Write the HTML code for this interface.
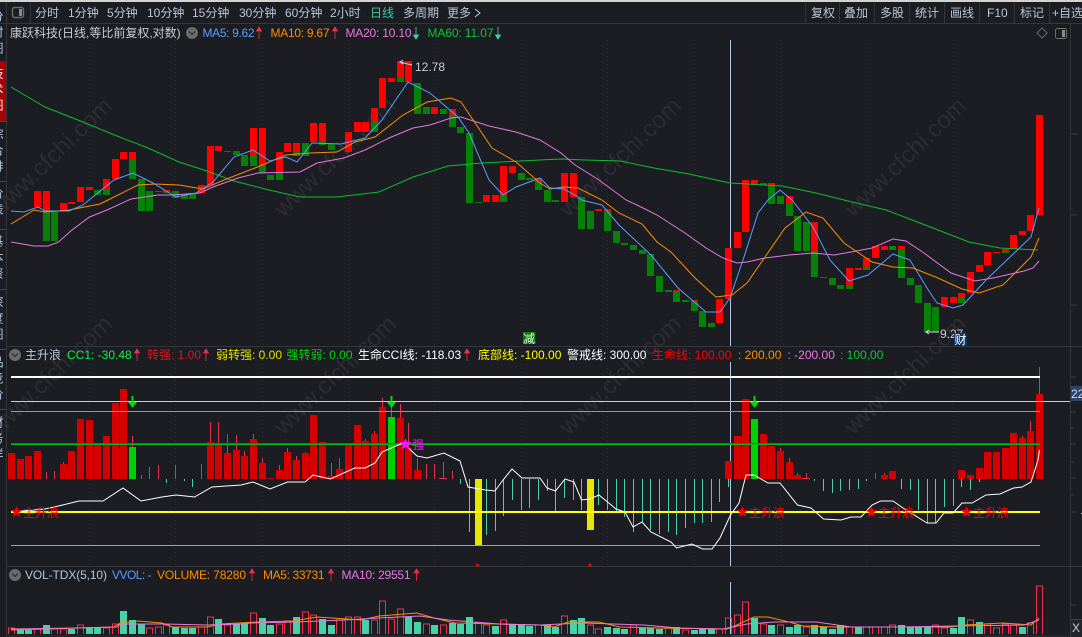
<!DOCTYPE html>
<html><head><meta charset="utf-8"><style>
html,body{margin:0;padding:0;background:#1b1d23;overflow:hidden}
svg{display:block}
text{font-family:"Liberation Sans","WenQuanYi Zen Hei","Noto Sans CJK SC",sans-serif;font-size:12px}
.tb{fill:#bcc5d2}
.v{writing-mode:vertical-rl;letter-spacing:4px;fill:#b8cce4;font-size:12px}
</style></head><body>
<svg width="1082" height="637" viewBox="0 0 1082 637" xmlns="http://www.w3.org/2000/svg">
<rect width="1082" height="637" fill="#1b1d23"/>
<!-- watermark -->
<g fill="#2b2d33" font-size="24" text-anchor="middle" style="font-size:24px">
<text style="font-size:24px" transform="translate(51,157) rotate(-44)" y="8">www.cfchi.com</text>
<text style="font-size:24px" transform="translate(335,157) rotate(-44)" y="8">www.cfchi.com</text>
<text style="font-size:24px" transform="translate(620,157) rotate(-44)" y="8">www.cfchi.com</text>
<text style="font-size:24px" transform="translate(905,157) rotate(-44)" y="8">www.cfchi.com</text>
<text style="font-size:24px" transform="translate(51,375) rotate(-44)" y="8">www.cfchi.com</text>
<text style="font-size:24px" transform="translate(335,375) rotate(-44)" y="8">www.cfchi.com</text>
<text style="font-size:24px" transform="translate(620,375) rotate(-44)" y="8">www.cfchi.com</text>
<text style="font-size:24px" transform="translate(905,375) rotate(-44)" y="8">www.cfchi.com</text>
</g>
<!-- top strip & toolbar -->
<rect width="1082" height="2" fill="#d4d4d4"/>
<path d="M0 23.5H1082M6.500 2V637M30.5 3V23M805.5 3V23M839.5 3V23M874.5 3V23M909.5 3V23M944.5 3V23M979.5 3V23M1014.5 3V23M1049.5 3V23M1070.5 24V637M7 346.5H1082M7 566.5H1082" stroke="#33363d" fill="none" shape-rendering="crispEdges"/>
<rect x="12.5" y="7.5" width="11" height="10" rx="2" fill="none" stroke="#6d6d6d" stroke-width="1.4"/><rect x="19" y="9" width="3" height="7" fill="#8a8a8a"/>
<g class="tb">
<text x="35" y="17">分时</text><text x="68" y="17">1分钟</text><text x="107" y="17">5分钟</text><text x="147" y="17">10分钟</text><text x="192" y="17">15分钟</text><text x="239" y="17">30分钟</text><text x="285" y="17">60分钟</text><text x="330" y="17">2小时</text>
<text x="370" y="17" style="fill:#3fc9a2">日线</text><text x="403" y="17">多周期</text><text x="447" y="17">更多</text>
<path d="M475 9l5 4-5 4" fill="none" stroke="#bcc5d2"/>
<text x="811" y="17">复权</text><text x="844" y="17">叠加</text><text x="880" y="17">多股</text><text x="915" y="17">统计</text><text x="950" y="17">画线</text><text x="987" y="17">F10</text><text x="1020" y="17">标记</text><text x="1052" y="17">+自选</text>
</g>
<!-- sidebar -->
<rect x="0" y="61" width="6" height="60" fill="#a80000"/>
<path d="M0 121.500H6M0 181.500H6M0 229.500H6M0 289.500H6M0 349.500H6M0 409.500H6" stroke="#44474e" shape-rendering="crispEdges"/>
<text class="v" x="-3" y="10">分时图</text>
<text class="v" x="-3" y="67" style="fill:#fff">技术图</text>
<text class="v" x="-3" y="128">综合排</text>
<text class="v" x="-3" y="187">价表</text>
<text class="v" x="-3" y="235">基本资</text>
<text class="v" x="-3" y="296">深度图</text>
<text class="v" x="-3" y="356">品竞价</text>
<text class="v" x="-3" y="416">财务详</text>
<!-- grid -->
<path d="M89.5 40V566M175.5 40V566M262.5 40V566M348.5 40V566M434.5 40V566M521.5 40V566M607.5 40V566M694.5 40V566M780.5 40V566M866.5 40V566M953.5 40V566" stroke="#2c2f36" stroke-dasharray="1 3" shape-rendering="crispEdges"/>
<path d="M1071 134h6M1071 215h6M1071 305h6M1071 377h5M1071 412h5M1071 428h3M1071 444h5M1071 462h3M1071 478h5M1071 495h3M1071 512h5M1071 605h5" stroke="#3a3d44" shape-rendering="crispEdges"/>
<path d="M1081 513.500h1" stroke="#c8ccd4" shape-rendering="crispEdges"/>
<!-- title row -->
<text x="10" y="37" fill="#c8ccd4">康跃科技(日线,等比前复权,对数)</text>
<circle cx="192" cy="33" r="6" fill="#6b6b6b"/><path d="M189 31.5l3 3 3-3" fill="none" stroke="#333" stroke-width="1.300"/>
<text x="202.5" y="37" fill="#5b9cff" textLength="52">MA5: 9.62</text><path d="M259 27l-2.5 4h5zM259 30V39" fill="#f0304a" stroke="#f0304a" stroke-width=".8"/>
<text x="270.5" y="37" fill="#ff8c00" textLength="59">MA10: 9.67</text><path d="M335 27l-2.5 4h5zM335 30V39" fill="#f0304a" stroke="#f0304a" stroke-width=".8"/>
<text x="345.5" y="37" fill="#e878e0" textLength="66">MA20: 10.10</text><path d="M416 39l-2.5-4h5zM416 27V36" fill="#45d2a8" stroke="#45d2a8" stroke-width=".8"/>
<text x="427.5" y="37" fill="#13c13a" textLength="66">MA60: 11.07</text><path d="M498 39l-2.5-4h5zM498 27V36" fill="#45d2a8" stroke="#45d2a8" stroke-width=".8"/>
<path d="M1042 28l5 5-5 5-5-5z" fill="none" stroke="#6a6a6a"/>
<rect x="1055.5" y="28.5" width="11" height="10" rx="2" fill="none" stroke="#6d6d6d"/><rect x="1062" y="30" width="3" height="7" fill="#8a8a8a"/>
<!-- crosshair -->
<path d="M730.5 40V346M730.5 362V566M730.5 582V634" stroke="#b4c4e8" shape-rendering="crispEdges"/>
<!-- candles -->
<g fill="none" stroke-width="7" shape-rendering="crispEdges">
<path stroke="#ff0000" d="M37.5 191V207M46.5 191V211M63.5 203V211M71.5 202V204M80.5 187V202M89.5 187V190M106.5 179V190M115.5 159V179M123.5 152V159M132.5 152V159M158.5 191V192M166.5 190V191M201.5 185V193M210.5 146V185M218.5 146V151M253.5 128V155M262.5 128V166M279.5 152V173M287.5 143V152M296.5 143V152M313.5 123V142M322.5 123V142M348.5 132V152M357.5 122V132M365.5 122V132M374.5 108V122M382.5 78V108M391.5 78V82M400.5 61V78M408.5 61V82M434.5 107V114M452.5 109V115M486.5 195V202M495.5 195V202M503.5 166V195M512.5 166V173M538.5 178V181M564.5 173V202M573.5 173V197M598.5 209V211M607.5 209V211M676.5 290V292M694.5 300V302M719.5 299V323M728.5 248V299M737.5 232V248M745.5 180V232M754.5 180V185M771.5 183V185M789.5 196V204M814.5 222V251M849.5 268V285M858.5 268V270M866.5 258V268M875.5 246V258M884.5 246V250M901.5 246V250M944.5 297V307M953.5 297V303M961.5 293V297M970.5 272V293M979.5 265V272M987.5 252V265M996.5 252V253M1005.5 249V252M1013.5 235V249M1022.5 231V235M1030.5 215V231M1039.5 115V215"/>
<path stroke="#068006" d="M46.5 211V241M54.5 211V241M97.5 190V195M106.5 190V195M132.5 159V179M141.5 179V211M149.5 191V211M166.5 191V193M175.5 191V198M184.5 195V199M192.5 193V199M227.5 151V152M236.5 151V155M244.5 155V166M253.5 155V166M262.5 166V173M270.5 175V180M279.5 173V180M296.5 152V156M305.5 143V156M322.5 142V145M331.5 144V150M374.5 122V132M400.5 78V82M417.5 83V114M426.5 107V114M443.5 109V114M452.5 115V127M460.5 127V133M469.5 133V203M478.5 202V203M503.5 195V202M521.5 173V180M529.5 178V180M538.5 181V190M547.5 190V202M555.5 200V202M581.5 197V229M590.5 211V229M607.5 211V231M616.5 231V243M624.5 243V245M633.5 245V250M642.5 250V254M650.5 254V276M659.5 276V292M668.5 290V292M676.5 292V302M685.5 300V302M694.5 302V311M702.5 311V327M711.5 323V327M763.5 183V185M771.5 185V204M780.5 196V204M789.5 204V216M797.5 216V251M806.5 222V251M814.5 251V277M823.5 277V278M832.5 278V285M840.5 285V289M849.5 285V289M866.5 268V270M892.5 246V250M901.5 250V278M910.5 278V285M918.5 285V303M927.5 303V332M935.5 307V332M961.5 297V303M1005.5 252V253"/>
</g>
<!-- MAs -->
<g fill="none" stroke-width="1">
<polyline stroke="#0dbc2b" points="11,87 45,107 83,122 117,136 148,148 179,162 207,171 234,181 269,190 300,197 337,197 379,192 413,177 448,166 482,163 540,160 561,159 585,160 620,161 654,168 689,174 730,183 782,186 816,193 844,200 886,210 920,223 969,242 1000,248 1038,250"/>
<polyline stroke="#e878e0" points="11,242 34,246 48,246 58.5,242 72,230 89.5,217 107,210 131,199 158,195 172,195 200,193 213,187 238,178 258,173 300,172 317,163 344,158 365,150 389,138 413,128 430,125 451,118 461,117 489,126 516,132 540,140 561,153 575,165 599,180 626,200 637,205 657,215 685,233 706,248 723,258 737,263 747,262 765,258 789,255 813,253 834,255 851,252 872,248 893,239 906,241 924,253 951,273 975,281 993,278 1024,271 1033,268 1039,261"/>
<polyline stroke="#ff8c00" points="11,224 34,210 45,212 69,210 100,204 110,199 138,185 155,184 179,185 203,189 224,180 255,168 286,155 310,153 337,152 355,142 375,137 403,115 427,102 451,98 461,102 492,148 516,162 540,183 550,189 564,187 578,188 602,200 619,213 642,224 657,242 671,252 695,278 716,297 732,295 747,283 765,257 785,228 806,212 823,218 844,243 872,262 893,267 913,268 938,278 962,289 979,293 1003,285 1020,268 1031,257 1039,238"/>
<polyline stroke="#5b9cff" points="11,211 24,212 38,207 45,211 69,211 83,205 89,200 114,180 133,173 153,183 176,197 196,193 213,182 234,157 253,150 270,161 286,157 297,162 312,143 341,144 365,138 382,120 408,82 430,93 458,117 469,133 489,180 503,195 516,187 540,178 550,188 564,189 578,197 581.5,200 602,205 619,225 651,255 678,288 706,312 720,312 730,298 744,257 758,213 768,200 780,190 792,200 813,227 830,260 849,281 868,275 893,254 910,260 927,288 937,303 953,308 963,305 986,280 1031,237 1039,208"/>
</g>
<!-- hi / lo labels -->
<path d="M412 65L400 62l3-2M400 62l3 2" fill="none" stroke="#d0d4dc"/>
<text x="415" y="71" fill="#c8ccd4">12.78</text>
<path d="M939 332H926l3-2M926 332l3 2" fill="none" stroke="#d0d4dc"/>
<text x="940" y="338" fill="#c8ccd4">9.27</text>
<rect x="523" y="332" width="12.5" height="12" fill="#0a7a0a"/><text x="523" y="343" fill="#e8f8e8">减</text>
<rect x="954" y="333" width="13" height="12" fill="#0d3a6b"/><text x="954.5" y="344" fill="#fff">财</text>
<!-- sub header -->
<circle cx="15" cy="355" r="6" fill="#6b6b6b"/><path d="M12 353.500l3 3 3-3" fill="none" stroke="#333" stroke-width="1.300"/>
<text x="25" y="359" fill="#c0cadb">主升浪</text>
<text x="67" y="359" fill="#10f040">CC1: -30.48</text><path d="M137 349l-2.500 4h5zM137 352V361" fill="#f0304a" stroke="#f0304a" stroke-width=".8"/>
<text x="147" y="359" fill="#d81818">转强: 1.00</text><path d="M206 349l-2.500 4h5zM206 352V361" fill="#f0304a" stroke="#f0304a" stroke-width=".8"/>
<text x="216" y="359" fill="#e0e000">弱转强: 0.00</text>
<text x="286.500" y="359" fill="#00d000">强转弱: 0.00</text>
<text x="358" y="359" fill="#ffffff">生命CCI线: -118.03</text><path d="M467 349l-2.500 4h5zM467 352V361" fill="#f0304a" stroke="#f0304a" stroke-width=".8"/>
<text x="478" y="359" fill="#ffff00">底部线: -100.00</text>
<text x="567" y="359" fill="#ffffff">警戒线: 300.00</text>
<text x="652" y="359" fill="#ff0000">生命线: 100.00</text>
<text x="738" y="359" fill="#ff8c00">: 200.00</text>
<text x="787.500" y="359" fill="#e878e0">: -200.00</text>
<text x="840" y="359" fill="#13c13a">: 100.00</text>
<!-- sub panel bars -->
<g fill="none" shape-rendering="crispEdges">
<path stroke="#d60000" stroke-width="7" d="M11.5 479V453M20.5 479V459M28.5 479V456M37.5 479V451M63.5 479V464M71.5 479V451M80.5 479V419M89.5 479V420M97.5 479V445M106.5 479V436M115.5 479V403M123.5 479V389M210.5 479V442M218.5 479V445M227.5 479V453M236.5 479V450M244.5 479V456M253.5 479V439M262.5 479V463M270.5 479V478M279.5 479V470M287.5 479V452M296.5 479V460M305.5 479V453M313.5 479V415M322.5 479V442M331.5 479V476M339.5 479V469M348.5 479V445M357.5 479V425M365.5 479V441M374.5 479V434M382.5 479V407M400.5 479V418M408.5 479V448M417.5 479V470M728.5 479V461M737.5 479V436M745.5 479V399M763.5 479V434M771.5 479V446M780.5 479V451M789.5 479V462M797.5 479V475M884.5 479V475M892.5 479V471M961.5 479V470M970.5 479V475M979.5 479V468M987.5 479V452M996.5 479V452M1005.5 479V448M1013.5 479V433M1022.5 479V438M1030.5 479V431M1039.5 479V394"/>
<path stroke="#00d000" stroke-width="7" d="M132.5 479V447M391.5 479V417M754.5 479V419"/>
<path stroke="#e8304a" d="M46.5 479V472M54.5 479V471M63.5 464V462M132.5 447V436M141.5 479V475M149.5 479V467M158.5 479V465M175.5 479V465M201.5 479V464M210.5 442V422M218.5 445V422M227.5 453V434M236.5 450V435M244.5 456V451M253.5 439V434M262.5 463V458M279.5 470V465M287.5 452V448M296.5 460V456M305.5 453V452M331.5 476V463M339.5 469V458M365.5 441V439M374.5 434V431M382.5 407V398M391.5 417V400M400.5 418V404M408.5 448V423M417.5 470V458M426.5 479V464M434.5 479V464M443.500 479V462M439 478.500h8M452.5 479V471M780.5 451V448M789.5 462V458M797.5 475V473M806.5 479V473M802 478.500h8M875.5 479V473M884.5 475V473M1022.5 438V436M1030.5 431V421M1039.5 394V367"/>
<path stroke="#45d2a8" d="M166.5 479V483M184.5 479V481M192.5 479V487M460.5 479V484M469.5 479V532M486.5 479V535M495.5 479V531M503.5 479V516M512.5 479V500M521.5 479V510M529.5 479V508M538.5 479V500M547.5 479V491M555.5 479V511M564.5 479V498M573.5 479V500M581.5 479V510M598.5 479V505M607.5 479V510M616.5 479V512M624.5 479V517M633.5 479V532M642.5 479V523M650.5 479V530M659.5 479V534M668.5 479V532M676.5 479V535M685.5 479V528M694.5 479V523M702.5 479V523M711.5 479V522M719.5 479V502M728.5 479V487M814.5 479V481M823.5 479V491M832.5 479V493M840.5 479V491M849.5 479V490M858.5 479V489M866.5 479V481M901.5 479V489M910.5 479V490M918.5 479V510M927.5 479V523M935.5 479V523M944.5 479V507M953.5 479V506M961.5 479V487M970.5 479V490M979.5 479V482"/>
<path stroke="#e5e500" stroke-width="7" d="M478.5 479V545M590.5 479V530"/>
<path stroke="#ffffff" stroke-width="2" d="M11 377H1040"/>
<path stroke="#c8ccd8" d="M11 401.5H1070"/>
<path stroke="#e08a20" d="M11 411.5H1040"/>
<path stroke="#d02020" d="M11 443.5H1040"/>
<path stroke="#08b818" d="M11 444.5H1040"/>
<path stroke="#ffff00" stroke-width="2" d="M11 512H1040"/>
<path stroke="#d37ed0" d="M11 545.5H1040"/>
</g>
<polyline fill="none" stroke="#ffffff" stroke-width="1" points="11,512 45,509 58.5,506 79,501 103,501 123,488 141,501 162,497 176,495 194.5,497 212,487 241,485 253,482 270,489 287.5,482 305,482 313,475 330.5,479 354.7,468 365,468 375,463 382,452 396,446 403,443 417,456 427,458 444,453 460,461 468,487 485.5,490 495,491 503,480 512,469 522,478 540,478 547,488 555.5,491 565,479 574,482 581.5,500 590,499 599,495 616,509 625,512 633,527 642,522 651,532 671,542 676.5,548 692,544 702.5,549 712,549 720,538 730.5,515 739,503 746,475 754,475 768,483 780,483 797.5,505 811,508 823.5,519 841,520 851,517 861,517 872,505 880.5,501 893,501 903,508 927,523 936,523 944,513 953,513 962,503 972,503 986,495 1000,494 1013.5,488 1022,487 1031,482 1038,460 1039.5,450"/>
<!-- green arrows -->
<path d="M131.500 396h2v6h3.500l-4.500 6-4.500-6h3.500z" fill="#10d010"/>
<path d="M390.500 396h2v6h3.500l-4.500 6-4.500-6h3.500z" fill="#10d010"/>
<path d="M753.500 396h2v6h3.500l-4.500 6-4.500-6h3.500z" fill="#10d010"/>
<!-- magenta star -->
<polygon points="405.500,438 407,442 411.500,442 408,445 409.500,449.500 405.500,447 401.500,449.500 403,445 399.500,442 404,442" fill="#ff10ff"/>
<text x="412" y="449" fill="#ff10ff">强</text>
<!-- red stars -->
<g fill="#ff0000">
<polygon transform="translate(16.500 512)" points="0,-6 1.500,-2 5.700,-2 2.300,.8 3.600,5 0,2.500 -3.600,5 -2.300,.8 -5.700,-2 -1.500,-2"/>
<text x="23" y="517">主升浪</text>
<polygon transform="translate(742.500 512)" points="0,-6 1.500,-2 5.700,-2 2.300,.8 3.600,5 0,2.500 -3.600,5 -2.300,.8 -5.700,-2 -1.500,-2"/>
<text x="749" y="517">主升浪</text>
<polygon transform="translate(871.500 512)" points="0,-6 1.500,-2 5.700,-2 2.300,.8 3.600,5 0,2.500 -3.600,5 -2.300,.8 -5.700,-2 -1.500,-2"/>
<text x="878" y="517">主升浪</text>
<polygon transform="translate(966.500 512)" points="0,-6 1.500,-2 5.700,-2 2.300,.8 3.600,5 0,2.500 -3.600,5 -2.300,.8 -5.700,-2 -1.500,-2"/>
<text x="973" y="517">主升浪</text>
<circle cx="477.500" cy="565" r="1.500"/><circle cx="590" cy="565" r="1.500"/>
</g>
<!-- label on axis -->
<rect x="1071" y="386" width="11" height="15" fill="#2d4468"/><text x="1071" y="398" fill="#c8d8f0">22</text>
<!-- vol header -->
<circle cx="15" cy="575" r="6" fill="#6b6b6b"/><path d="M12 573.500l3 3 3-3" fill="none" stroke="#333" stroke-width="1.300"/>
<text x="25" y="579" fill="#b8c4d4" textLength="82">VOL-TDX(5,10)</text>
<text x="112" y="579" fill="#5b9cff" textLength="39.500">VVOL: -</text>
<text x="157" y="579" fill="#ff8c00" textLength="89">VOLUME: 78280</text><path d="M252 569l-2.500 4h5zM252 572V581" fill="#f0304a" stroke="#f0304a" stroke-width=".8"/>
<text x="263" y="579" fill="#ff8c00" textLength="61.500">MA5: 33731</text><path d="M331 569l-2.500 4h5zM331 572V581" fill="#f0304a" stroke="#f0304a" stroke-width=".8"/>
<text x="341.500" y="579" fill="#e878e0" textLength="69">MA10: 29551</text><path d="M416.500 569l-2.500 4h5zM416.500 572V581" fill="#f0304a" stroke="#f0304a" stroke-width=".8"/>
<!-- volume bars -->
<g fill="none" shape-rendering="crispEdges">
<path stroke="#45d2a8" stroke-width="7" d="M20.500 634V629M28.500 634V630M46.500 634V625M71.500 634V629M89.500 634V627M97.500 634V627M123.500 634V611M132.500 634V620M141.500 634V624M175.500 634V627M184.500 634V628M192.500 634V628M218.500 634V619M236.500 634V624M244.500 634V623M262.500 634V618M270.500 634V625M296.500 634V617M322.500 634V619M331.500 634V625M365.500 634V620M408.500 634V617M417.500 634V622M434.500 634V625M452.500 634V623M460.500 634V624M469.500 634V617M495.500 634V626M512.500 634V624M521.500 634V625M529.500 634V626M547.500 634V625M555.500 634V627M573.500 634V620M581.500 634V618M607.500 634V627M616.500 634V628M624.500 634V629M642.500 634V628M650.500 634V628M659.500 634V629M676.500 634V627M694.500 634V630M702.500 634V629M711.500 634V629M754.500 634V618M771.500 634V625M789.500 634V627M797.500 634V625M814.500 634V625M823.500 634V627M832.500 634V629M840.500 634V625M858.500 634V627M901.500 634V625M910.500 634V627M918.500 634V627M927.500 634V627M953.500 634V628M961.500 634V617M979.500 634V622M1022.500 634V627"/>
<path stroke="#f0304a" stroke-width="1.300" d="M8.500 634V628h6V634M34.500 634V629h6V634M51.500 634V629h6V634M60.500 634V629h6V634M77.500 634V625h6V634M103.500 634V628h6V634M112.500 634V624h6V634M146.500 634V628h6V634M155.500 634V627h6V634M163.500 634V625h6V634M198.500 634V627h6V634M207.500 634V617h6V634M224.500 634V625h6V634M250.500 634V613h6V634M276.500 634V624h6V634M284.500 634V621h6V634M302.500 634V612h6V634M310.500 634V615h6V634M336.500 634V620h6V634M345.500 634V617h6V634M354.500 634V617h6V634M371.500 634V620h6V634M379.500 634V601h6V634M388.500 634V619h6V634M397.500 634V609h6V634M423.500 634V624h6V634M440.500 634V625h6V634M475.500 634V623h6V634M483.500 634V625h6V634M500.500 634V620h6V634M535.500 634V625h6V634M561.500 634V616h6V634M587.500 634V625h6V634M595.500 634V629h6V634M630.500 634V625h6V634M665.500 634V628h6V634M682.500 634V630h6V634M716.500 634V629h6V634M725.500 634V618h6V634M734.500 634V615h6V634M742.500 634V602h6V634M760.500 634V624h6V634M777.500 634V625h6V634M803.500 634V627h6V634M846.500 634V627h6V634M863.500 634V627h6V634M872.500 634V627h6V634M881.500 634V627h6V634M889.500 634V625h6V634M932.500 634V625h6V634M941.500 634V628h6V634M967.500 634V620h6V634M984.500 634V624h6V634M993.500 634V628h6V634M1002.500 634V624h6V634M1010.500 634V625h6V634M1027.500 634V623h6V634M1036.500 634V586h6V634"/>
</g>
<g fill="none" stroke-width="1">
<polyline stroke="#ff8c00" points="11,630 79,628 113.600,627 120.500,623 138,621 162,623 172,627 207,627 220,624 258,622 293,621 317,617 361.600,620 379,616 417,613 434,618 455,623 540,625 554,627 568,622 599,622 619.500,627 657.500,628 727,629 737,625 754,617 768,617 789,622 803,626 834,627 906,627 951,627 965,625 1003,623 1031,625 1039,618"/>
<polyline stroke="#e878e0" points="11,629 76,628 117,627 120.500,624 165,624 207,625 241,624 251,623 296,622 344,620 379,618 420,616 448,620 499,624 540,625 561,624 585,623 612.600,624 644,625 678,628 723,629 747,624 775,622 816.500,622 851,627 899.500,627 955,626 1024,625 1039,620"/>
</g>
<!-- bottom -->
<rect x="7" y="635" width="1063" height="2" fill="#24262d"/>
<rect x="731" y="635" width="77" height="2" fill="#2d4468"/>
<rect x="1071" y="619" width="11" height="18" fill="#24262d"/>
<path d="M1071 619.500H1082" stroke="#3a3d44" shape-rendering="crispEdges"/>
<text x="1072" y="632" fill="#c8ccd4">X</text>
</svg>
</body></html>
